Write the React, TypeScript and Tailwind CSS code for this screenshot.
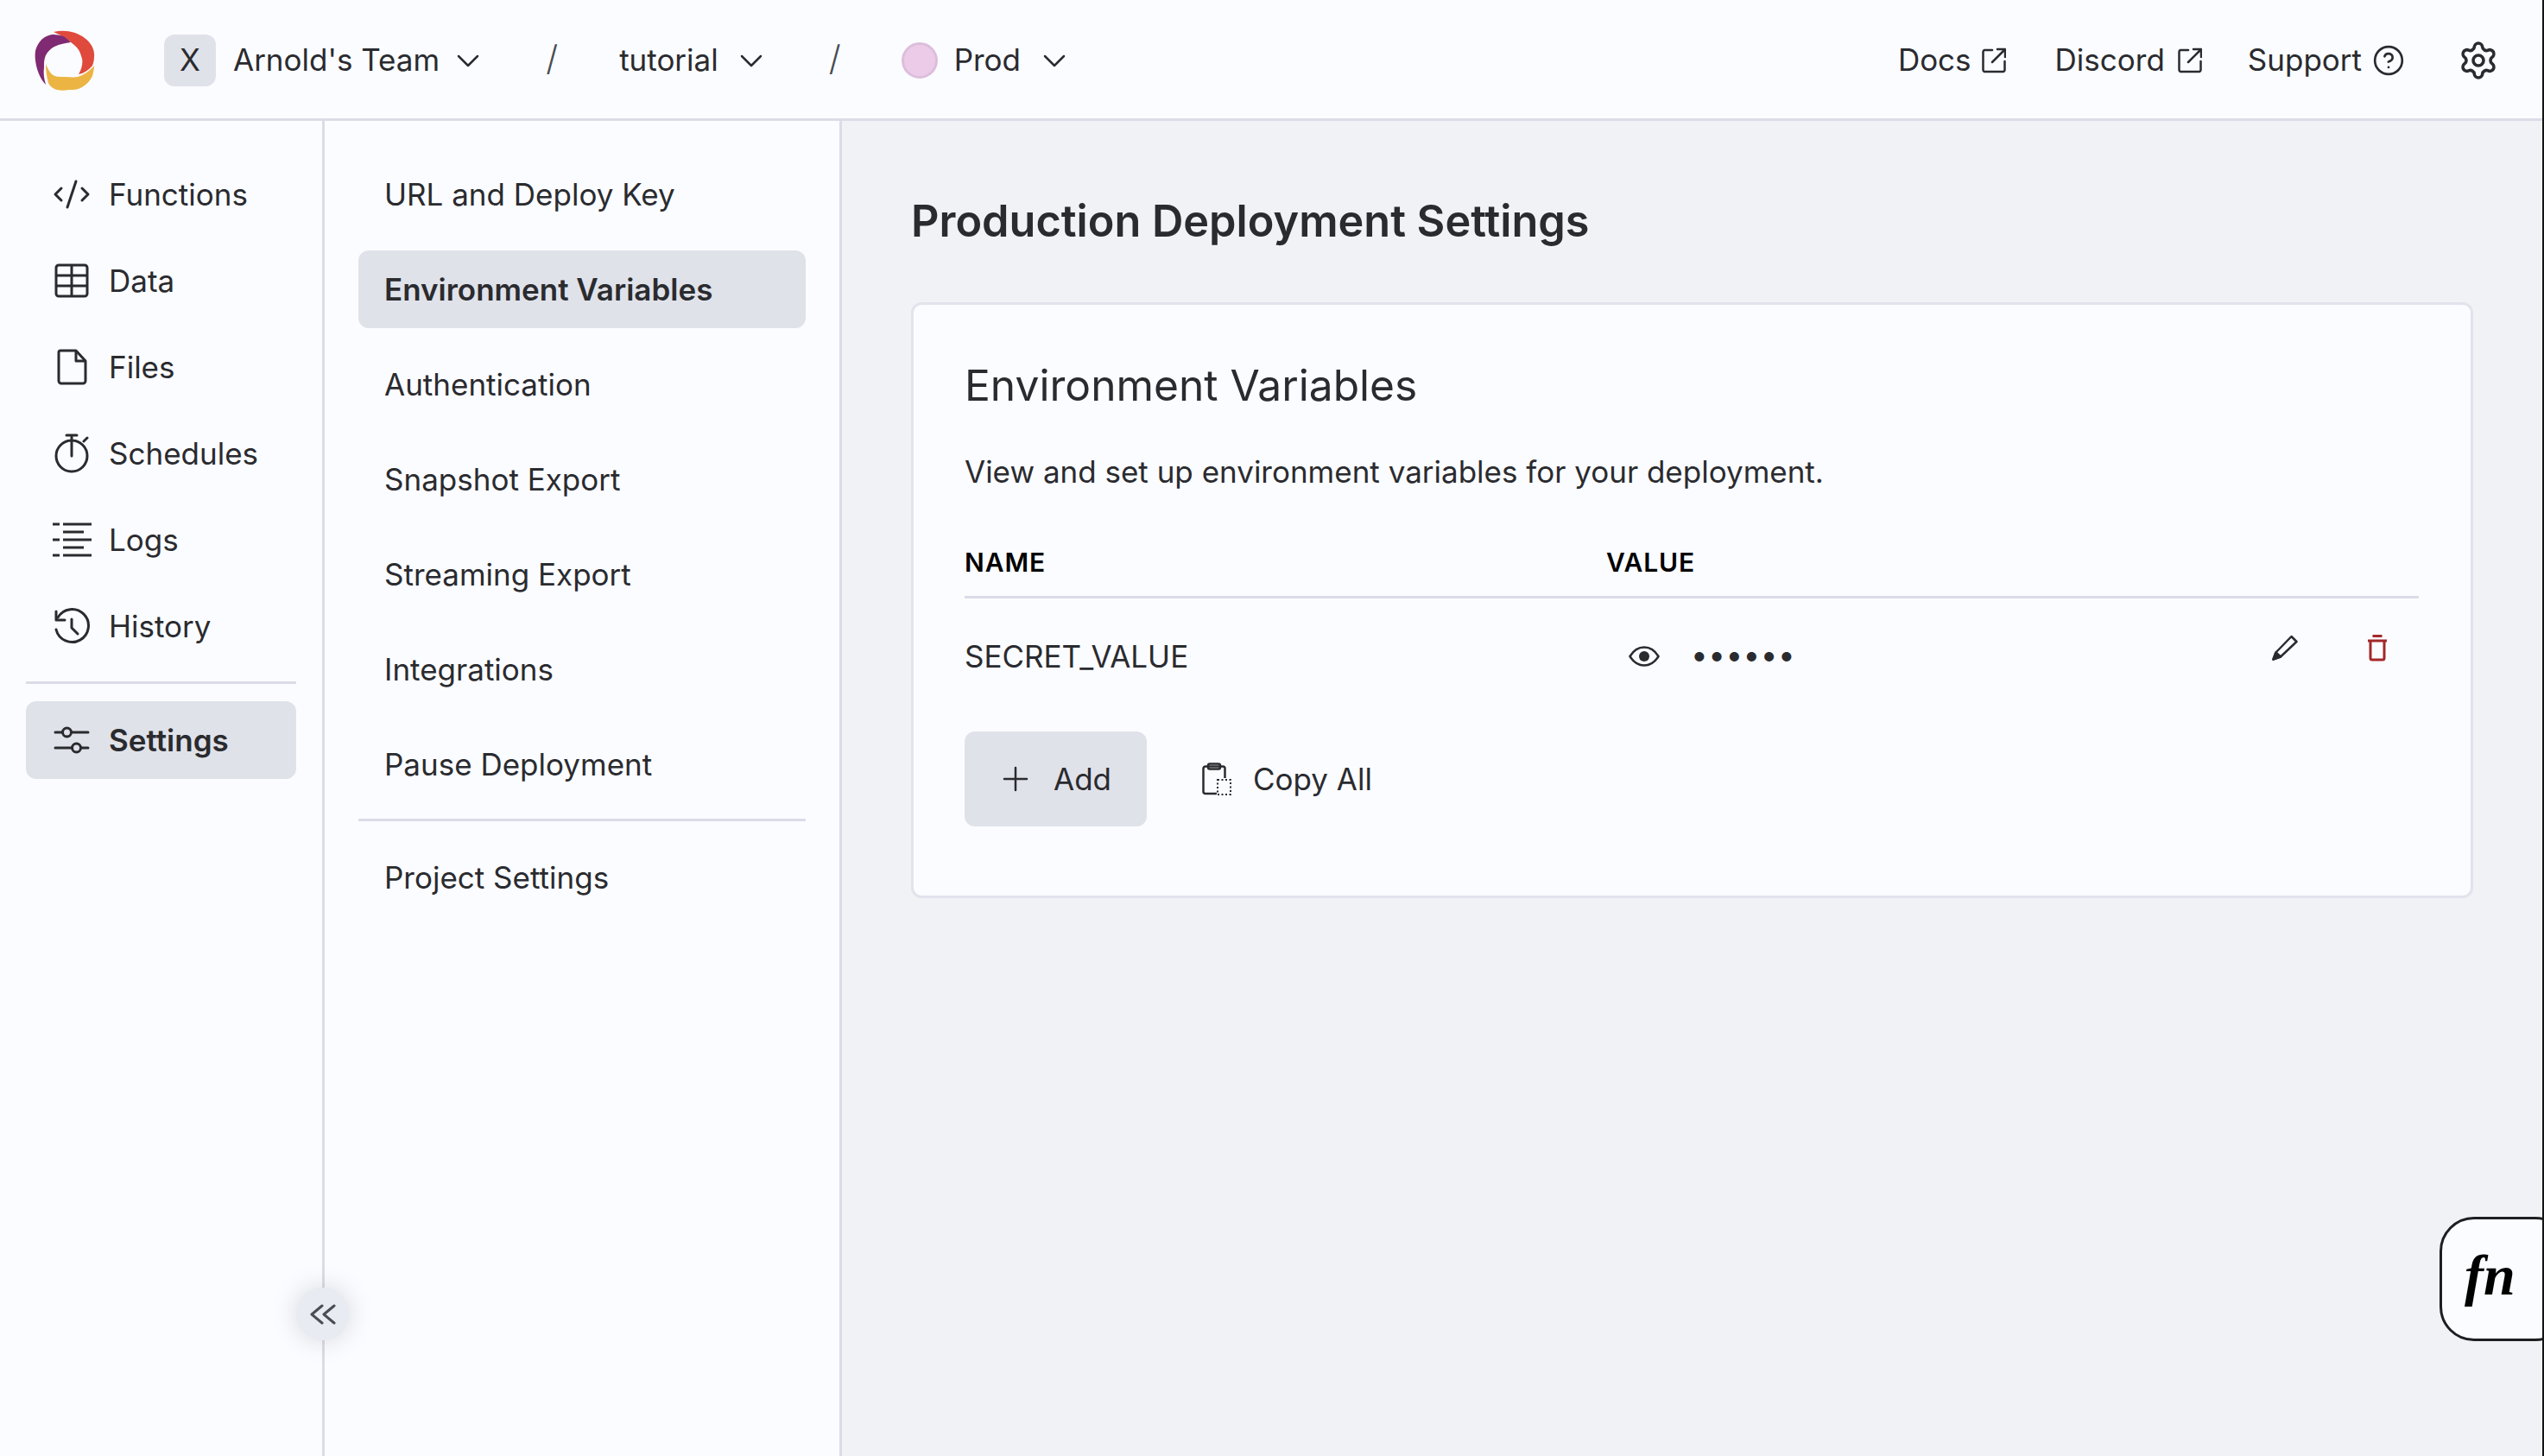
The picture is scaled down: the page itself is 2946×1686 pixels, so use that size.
import React from "react";
import { Settings, CircleHelp } from "lucide-react";

const ink = "#2a2b2f";

function Logo() {
  return (
    <svg width="70" height="70" viewBox="0 0 70 70" className="shrink-0">
      <path d="M22 2 C 34 -1 48 1 58 9 C 66 15 70 23 69 31 C 69 35 68 38 67 41 C 63 46 57 50 51 51 C 55 44 56 38 55 33 C 53 26 52 23 48 19 C 42 13 32 6 22 2 Z" fill="#df4a3c" />
      <path d="M42 14 C 38 10 35 7 30 6 C 26 5 23 5 20 5 C 15 6 11 8 8 11 C 4 15 2 20 1 24 C 0 30 1 36 2 41 C 4 50 8 58 13 63 C 11 56 10 50 11 43 C 11 37 11 34 13 29 C 15 25 19 21 23 19 C 29 16 36 15 42 14 Z" fill="#7f2a72" />
      <path d="M13 39 C 15 44 17 48 20 51 C 24 54 28 54 33 54 C 38 54 45 55 50 54 C 57 52 64 47 69 41 C 69 45 68 49 67 53 C 64 59 60 63 55 66 C 50 69 45 69 40 69 C 33 70 28 70 23 68 C 20 66 17 64 16 61 C 14 54 13 46 13 39 Z" fill="#ecb443" />
    </svg>
  );
}

function Caret() {
  return (
    <svg width="28" height="28" viewBox="0 0 28 28" fill="none" stroke={ink} strokeWidth="2.500" strokeLinecap="round" strokeLinejoin="round">
      <path d="M3 9 L14 20 L25 9" />
    </svg>
  );
}

function Slash() {
  return <span className="text-[40px] font-light leading-none text-[#4a4c52]">/</span>;
}

function Ext() {
  return (
    <svg width="28" height="30" viewBox="0 0 28 30" fill="none" stroke={ink} strokeWidth="2.500" strokeLinecap="round" strokeLinejoin="round">
      <path d="M12 3 H3 A2 2 0 0 0 1.500 5 V26 A2 2 0 0 0 3 28 H25 A2 2 0 0 0 26.500 26 V16" />
      <path d="M12 17 L26 3 M18 2 H27 V11" />
    </svg>
  );
}

function CodeIcon() {
  return (
    <svg width="44" height="44" viewBox="0 0 44 44" fill="none" stroke={ink} strokeWidth="3" strokeLinecap="round" strokeLinejoin="round">
      <path d="M10 15 L3 22 L10 29" />
      <path d="M34 15 L41 22 L34 29" />
      <path d="M27 7 L17 37" />
    </svg>
  );
}

function TableIcon() {
  return (
    <svg width="44" height="44" viewBox="0 0 44 44" fill="none" stroke={ink} strokeWidth="3" strokeLinejoin="round">
      <rect x="4" y="4" width="36" height="36" rx="3" />
      <path d="M4 16 H40 M4 28 H40 M22 4 V40" />
    </svg>
  );
}

function FileIcon() {
  return (
    <svg width="44" height="44" viewBox="0 0 44 44" fill="none" stroke={ink} strokeWidth="3" strokeLinejoin="round">
      <path d="M9 3 H27 L38 15 V38 A3 3 0 0 1 35 41 H10 A3 3 0 0 1 7 38 V5 A2 2 0 0 1 9 3 Z" />
      <path d="M27 3 V15 H38" />
    </svg>
  );
}

function TimerIcon() {
  return (
    <svg width="44" height="48" viewBox="0 0 44 48" fill="none" stroke={ink} strokeWidth="3" strokeLinecap="round">
      <circle cx="22" cy="27" r="18" />
      <path d="M16 3 H28 M22 3 V27 M36 10 L40 6" />
    </svg>
  );
}

function LogsIcon() {
  return (
    <svg width="46" height="44" viewBox="0 0 46 44" fill="none" stroke={ink} strokeWidth="3">
      <path d="M1 4 H9 M13 4 H46 M1 22 H9 M13 22 H46 M1 40 H9 M13 40 H46 M13 13 H37 M13 31 H37" />
    </svg>
  );
}

function HistoryIcon() {
  return (
    <svg width="44" height="44" viewBox="0 0 44 44" fill="none" stroke={ink} strokeWidth="3" strokeLinecap="round" strokeLinejoin="round">
      <path d="M6 12 A19 19 0 1 1 4 26" />
      <path d="M4 5 V15 H14" />
      <path d="M22 14 V24 L29 31" />
    </svg>
  );
}

function SlidersIcon() {
  return (
    <svg width="44" height="44" viewBox="0 0 44 44" fill="none" stroke={ink} strokeWidth="3" strokeLinecap="round">
      <path d="M3 13 H11 M22 13 H41 M3 31 H22 M33 31 H41" />
      <circle cx="16.500" cy="13" r="5" />
      <circle cx="27.500" cy="31" r="5" />
    </svg>
  );
}

function EyeIcon() {
  return (
    <svg width="36" height="24" viewBox="0 0 36 24" fill="none" className="ml-[26px]">
      <path d="M1.500 12 C 6 4.500 12 1.500 18 1.500 C 24 1.500 30 4.500 34.500 12 C 30 19.500 24 22.500 18 22.500 C 12 22.500 6 19.500 1.500 12 Z" stroke={ink} strokeWidth="2.500" />
      <circle cx="18" cy="12" r="6" fill={ink} />
    </svg>
  );
}

function PencilIcon() {
  return (
    <svg width="30" height="30" viewBox="0 0 30 30" fill="none" stroke={ink} strokeWidth="2.500" strokeLinejoin="round" className="ml-auto mb-[20px]">
      <path d="M1.500 28.500 L4.500 20.500 L22.500 2 L28.500 8 L10 25.500 Z" />
      <path d="M1.500 28.500 L4.500 20.500 L10 25.500 Z" fill={ink} />
    </svg>
  );
}

function TrashIcon() {
  return (
    <svg width="24" height="31" viewBox="0 0 24 31" fill="none" stroke="#a3282a" strokeWidth="3">
      <path d="M1 7 H23 M6.500 1.500 H17.500" />
      <path d="M4 7 V27 A2 2 0 0 0 6 29 H18 A2 2 0 0 0 20 27 V7" />
    </svg>
  );
}

function PlusIcon() {
  return (
    <svg width="46" height="46" viewBox="0 0 46 46" fill="none" stroke={ink} strokeWidth="2.500" strokeLinecap="round">
      <path d="M23 10 V36 M10 23 H36" />
    </svg>
  );
}

function ClipIcon() {
  return (
    <svg width="34" height="38" viewBox="0 0 34 38" fill="none" stroke={ink} strokeWidth="2.500">
      <path d="M17 36 H4 A2.500 2.500 0 0 1 1.500 33.500 V7 A2.500 2.500 0 0 1 4 4.500 H24 A2.500 2.500 0 0 1 26.500 7 V18" />
      <rect x="7" y="1.500" width="14" height="6" rx="2" />
      <rect x="18" y="20" width="15" height="17" strokeWidth="2" strokeDasharray="2 2.500" />
    </svg>
  );
}

function DoubleLeft() {
  return (
    <svg width="30" height="24" viewBox="0 0 30 24" fill="none" stroke="#4a4d55" strokeWidth="3" strokeLinecap="round" strokeLinejoin="round">
      <path d="M14 2 L2 12 L14 22" />
      <path d="M28 2 L16 12 L28 22" />
    </svg>
  );
}

const mainNav: { label: string; icon: React.ReactNode }[] = [
  { label: "Functions", icon: <CodeIcon /> },
  { label: "Data", icon: <TableIcon /> },
  { label: "Files", icon: <FileIcon /> },
  { label: "Schedules", icon: <TimerIcon /> },
  { label: "Logs", icon: <LogsIcon /> },
  { label: "History", icon: <HistoryIcon /> },
];

const subNav = [
  "URL and Deploy Key",
  "Environment Variables",
  "Authentication",
  "Snapshot Export",
  "Streaming Export",
  "Integrations",
  "Pause Deployment",
];

export default function App() {
  return (
    <div
      className="relative flex h-[1686px] w-[2946px] flex-col overflow-hidden bg-[#f1f2f6] text-[35px] text-[#2a2b2f]"
      style={{ fontFamily: "Inter, 'Noto Sans', sans-serif" }}
    >
      <header className="flex h-[140px] shrink-0 items-center border-b-[3px] border-[#dcdce8] bg-[#fbfcff] pl-[40px] pr-[52px] pt-[2px]">
        <Logo />
        <div className="ml-[80px] flex h-[60px] w-[60px] items-center justify-center rounded-[12px] bg-[#e0e2e9]">X</div>
        <span className="ml-[20px]">Arnold's Team</span>
        <span className="ml-[19px] flex"><Caret /></span>
        <span className="ml-[76px]"><Slash /></span>
        <span className="ml-[71px]">tutorial</span>
        <span className="ml-[24px] flex"><Caret /></span>
        <span className="ml-[76px]"><Slash /></span>
        <span className="ml-[70px] h-[42px] w-[42px] rounded-full border-[3px] border-[#dcbedc] bg-[#eccbe8]" />
        <span className="ml-[19px]">Prod</span>
        <span className="ml-[25px] flex"><Caret /></span>
        <div className="ml-auto flex items-center">
          <span>Docs</span>
          <span className="ml-[12px] flex"><Ext /></span>
          <span className="ml-[57px]">Discord</span>
          <span className="ml-[15px] flex"><Ext /></span>
          <span className="ml-[53px]">Support</span>
          <CircleHelp size={38} strokeWidth={1.7} color={ink} className="ml-[12px]" />
          <Settings size={48} strokeWidth={1.8} color={ink} className="ml-[61px]" />
        </div>
      </header>
      <div className="flex min-h-0 flex-1">
        <aside className="relative flex w-[376px] shrink-0 flex-col gap-[10px] border-r-[3px] border-[#dcdce8] bg-[#fbfcff] pl-[30px] pr-[30px] pt-[40px]">
          {mainNav.map((item) => (
            <div key={item.label} className="flex h-[90px] items-center gap-[20px] px-[30px]">
              <span className="flex w-[46px] shrink-0 justify-center">{item.icon}</span>
              <span>{item.label}</span>
            </div>
          ))}
          <div className="mt-[9px] h-[3px] bg-[#dcdce8]" />
          <div className="mt-[10px] flex h-[90px] items-center gap-[20px] rounded-[12px] bg-[#e0e2e9] px-[30px] font-semibold">
            <span className="flex w-[46px] shrink-0 justify-center"><SlidersIcon /></span>
            <span>Settings</span>
          </div>
          <button className="absolute left-[343px] top-[1351px] flex h-[61px] w-[61px] items-center justify-center rounded-full bg-[#e9ebf2] shadow-[0_0_30px_rgba(0,0,0,0.15)]">
            <DoubleLeft />
          </button>
        </aside>
        <nav className="flex w-[599px] shrink-0 flex-col border-r-[3px] border-[#dcdce8] bg-[#fbfcff] pl-[39px] pr-[39px] pt-[40px]">
          <div className="flex flex-col gap-[20px]">
            {subNav.map((label) => (
              <div
                key={label}
                className={
                  label === "Environment Variables"
                    ? "flex h-[90px] items-center rounded-[12px] bg-[#e0e2e9] px-[30px] font-semibold"
                    : "flex h-[90px] items-center px-[30px]"
                }
              >
                {label}
              </div>
            ))}
          </div>
          <div className="mt-[18px] h-[3px] bg-[#dcdce8]" />
          <div className="mt-[20px] flex h-[90px] items-center px-[30px]">Project Settings</div>
        </nav>
        <main className="min-w-0 flex-1 pl-[80px] pr-[82px] pt-[80px]">
          <h1 className="h-[71px] text-[50.400px] font-semibold leading-[71px]">Production Deployment Settings</h1>
          <section className="mt-[59px] h-[690px] rounded-[12px] border-[3px] border-[#e2e3ec] bg-[#fbfcff] pl-[59px] pr-[60px] pt-[58px]">
            <h2 className="text-[49.700px] leading-[70px]">Environment Variables</h2>
            <p className="mt-[35px] leading-[60px]">View and set up environment variables for your deployment.</p>
            <div className="mt-[51px] flex h-[48px] items-center text-[30px] font-semibold uppercase tracking-[0.03em] text-black">
              <span className="w-[743px]">Name</span>
              <span>Value</span>
            </div>
            <div className="mt-[15px] h-[3px] bg-[#dcdce8]" />
            <div className="flex h-[134px] items-center">
              <span className="w-[743px]">SECRET_VALUE</span>
              <EyeIcon />
              <span className="mb-[3px] ml-[36px] text-[35px] leading-none tracking-[0.5px]">••••••</span>
              <PencilIcon />
              <span className="ml-[80px] mb-[20px] mr-[36px] flex"><TrashIcon /></span>
            </div>
            <div className="mt-[20px] flex items-center">
              <div className="flex h-[110px] w-[211px] items-center gap-[21px] rounded-[12px] bg-[#e0e2e9] pl-[36px]">
                <PlusIcon />
                <span>Add</span>
              </div>
              <span className="ml-[64px] flex"><ClipIcon /></span>
              <span className="ml-[25px]">Copy All</span>
            </div>
          </section>
        </main>
      </div>
      <div
        className="absolute right-[-30px] top-[1409px] flex h-[144px] w-[151px] items-center rounded-[40px] border-[3px] border-[#1d1e22] bg-[#fbfcff] pb-[10px] pl-[26px] text-[66px] font-bold italic text-black"
        style={{ fontFamily: "'Liberation Serif', serif" }}
      >
        fn
      </div>
      <div className="absolute bottom-0 right-0 top-0 w-[2px] bg-[#141414]" />
    </div>
  );
}
